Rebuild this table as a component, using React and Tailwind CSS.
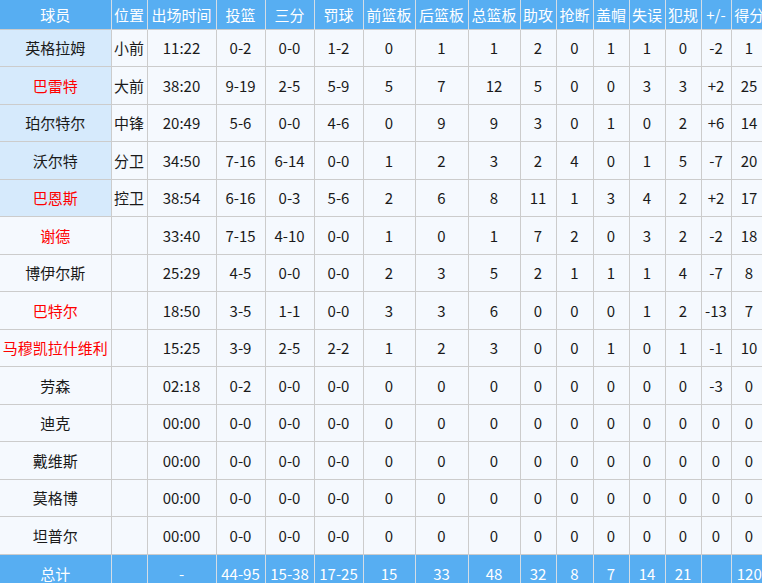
const cols = [
  { label: '球员', w: 111 },
  { label: '位置', w: 36 },
  { label: '出场时间', w: 69 },
  { label: '投篮', w: 49 },
  { label: '三分', w: 49 },
  { label: '罚球', w: 49 },
  { label: '前篮板', w: 52 },
  { label: '后篮板', w: 53 },
  { label: '总篮板', w: 52 },
  { label: '助攻', w: 36 },
  { label: '抢断', w: 37 },
  { label: '盖帽', w: 36 },
  { label: '失误', w: 36 },
  { label: '犯规', w: 36 },
  { label: '+/-', w: 30 },
  { label: '得分', w: 36 },
];

const zeros = ['00:00', '0-0', '0-0', '0-0', '0', '0', '0', '0', '0', '0', '0', '0', '0', '0'];

// [name, position, red?, ...stats]
const players = [
  ['英格拉姆', '小前', false, '11:22', '0-2', '0-0', '1-2', '0', '1', '1', '2', '0', '1', '1', '0', '-2', '1'],
  ['巴雷特', '大前', true, '38:20', '9-19', '2-5', '5-9', '5', '7', '12', '5', '0', '0', '3', '3', '+2', '25'],
  ['珀尔特尔', '中锋', false, '20:49', '5-6', '0-0', '4-6', '0', '9', '9', '3', '0', '1', '0', '2', '+6', '14'],
  ['沃尔特', '分卫', false, '34:50', '7-16', '6-14', '0-0', '1', '2', '3', '2', '4', '0', '1', '5', '-7', '20'],
  ['巴恩斯', '控卫', true, '38:54', '6-16', '0-3', '5-6', '2', '6', '8', '11', '1', '3', '4', '2', '+2', '17'],
  ['谢德', '', true, '33:40', '7-15', '4-10', '0-0', '1', '0', '1', '7', '2', '0', '3', '2', '-2', '18'],
  ['博伊尔斯', '', false, '25:29', '4-5', '0-0', '0-0', '2', '3', '5', '2', '1', '1', '1', '4', '-7', '8'],
  ['巴特尔', '', true, '18:50', '3-5', '1-1', '0-0', '3', '3', '6', '0', '0', '0', '1', '2', '-13', '7'],
  ['马穆凯拉什维利', '', true, '15:25', '3-9', '2-5', '2-2', '1', '2', '3', '0', '0', '1', '0', '1', '-1', '10'],
  ['劳森', '', false, '02:18', '0-2', '0-0', '0-0', '0', '0', '0', '0', '0', '0', '0', '0', '-3', '0'],
  ['迪克', '', false, ...zeros],
  ['戴维斯', '', false, ...zeros],
  ['莫格博', '', false, ...zeros],
  ['坦普尔', '', false, ...zeros],
];

const totals = ['总计', '', '-', '44-95', '15-38', '17-25', '15', '33', '48', '32', '8', '7', '14', '21', '', '120'];

export default function App() {
  return (
    <div
      className="w-[762px] h-[583px] overflow-hidden bg-[#f5f9fe]"
      style={{ fontFamily: '"Noto Sans CJK SC", "Noto Sans", sans-serif' }}
    >
      <table className="border-collapse table-fixed text-[15px] leading-none w-[767px]">
        <colgroup>
          {cols.map((c, i) => (
            <col key={i} style={{ width: c.w }} />
          ))}
        </colgroup>
        <thead>
          <tr className="h-[29px] bg-[#57aef2] text-white">
            {cols.map((c, i) => (
              <th
                key={i}
                className="font-normal p-0 text-center whitespace-nowrap border-l border-[#d4dde6] first:border-l-0"
              >
                {c.label}
              </th>
            ))}
          </tr>
        </thead>
        <tbody>
          {players.map((p, r) => {
            const [name, pos, red, ...stats] = p;
            const starter = r < 5;
            return (
              <tr key={r} className="h-[37.5px] text-[#1a1a1a]">
                <td
                  className={`p-0 text-center whitespace-nowrap border border-l-0 border-[#cccccc] ${
                    starter ? 'bg-[#d6eafc]' : ''
                  } ${red ? 'text-[#ff0000]' : ''}`}
                >
                  {name}
                </td>
                <td className="p-0 text-center whitespace-nowrap border border-[#cccccc]">{pos}</td>
                {stats.map((s, i) => (
                  <td key={i} className="p-0 text-center whitespace-nowrap border border-[#cccccc]">
                    {s}
                  </td>
                ))}
              </tr>
            );
          })}
          <tr className="h-[37.5px] bg-[#57aef2] text-white">
            {totals.map((t, i) => (
              <td
                key={i}
                className="p-0 text-center whitespace-nowrap border-l border-t border-[#d4dde6] first:border-l-0"
              >
                {t}
              </td>
            ))}
          </tr>
        </tbody>
      </table>
    </div>
  );
}
